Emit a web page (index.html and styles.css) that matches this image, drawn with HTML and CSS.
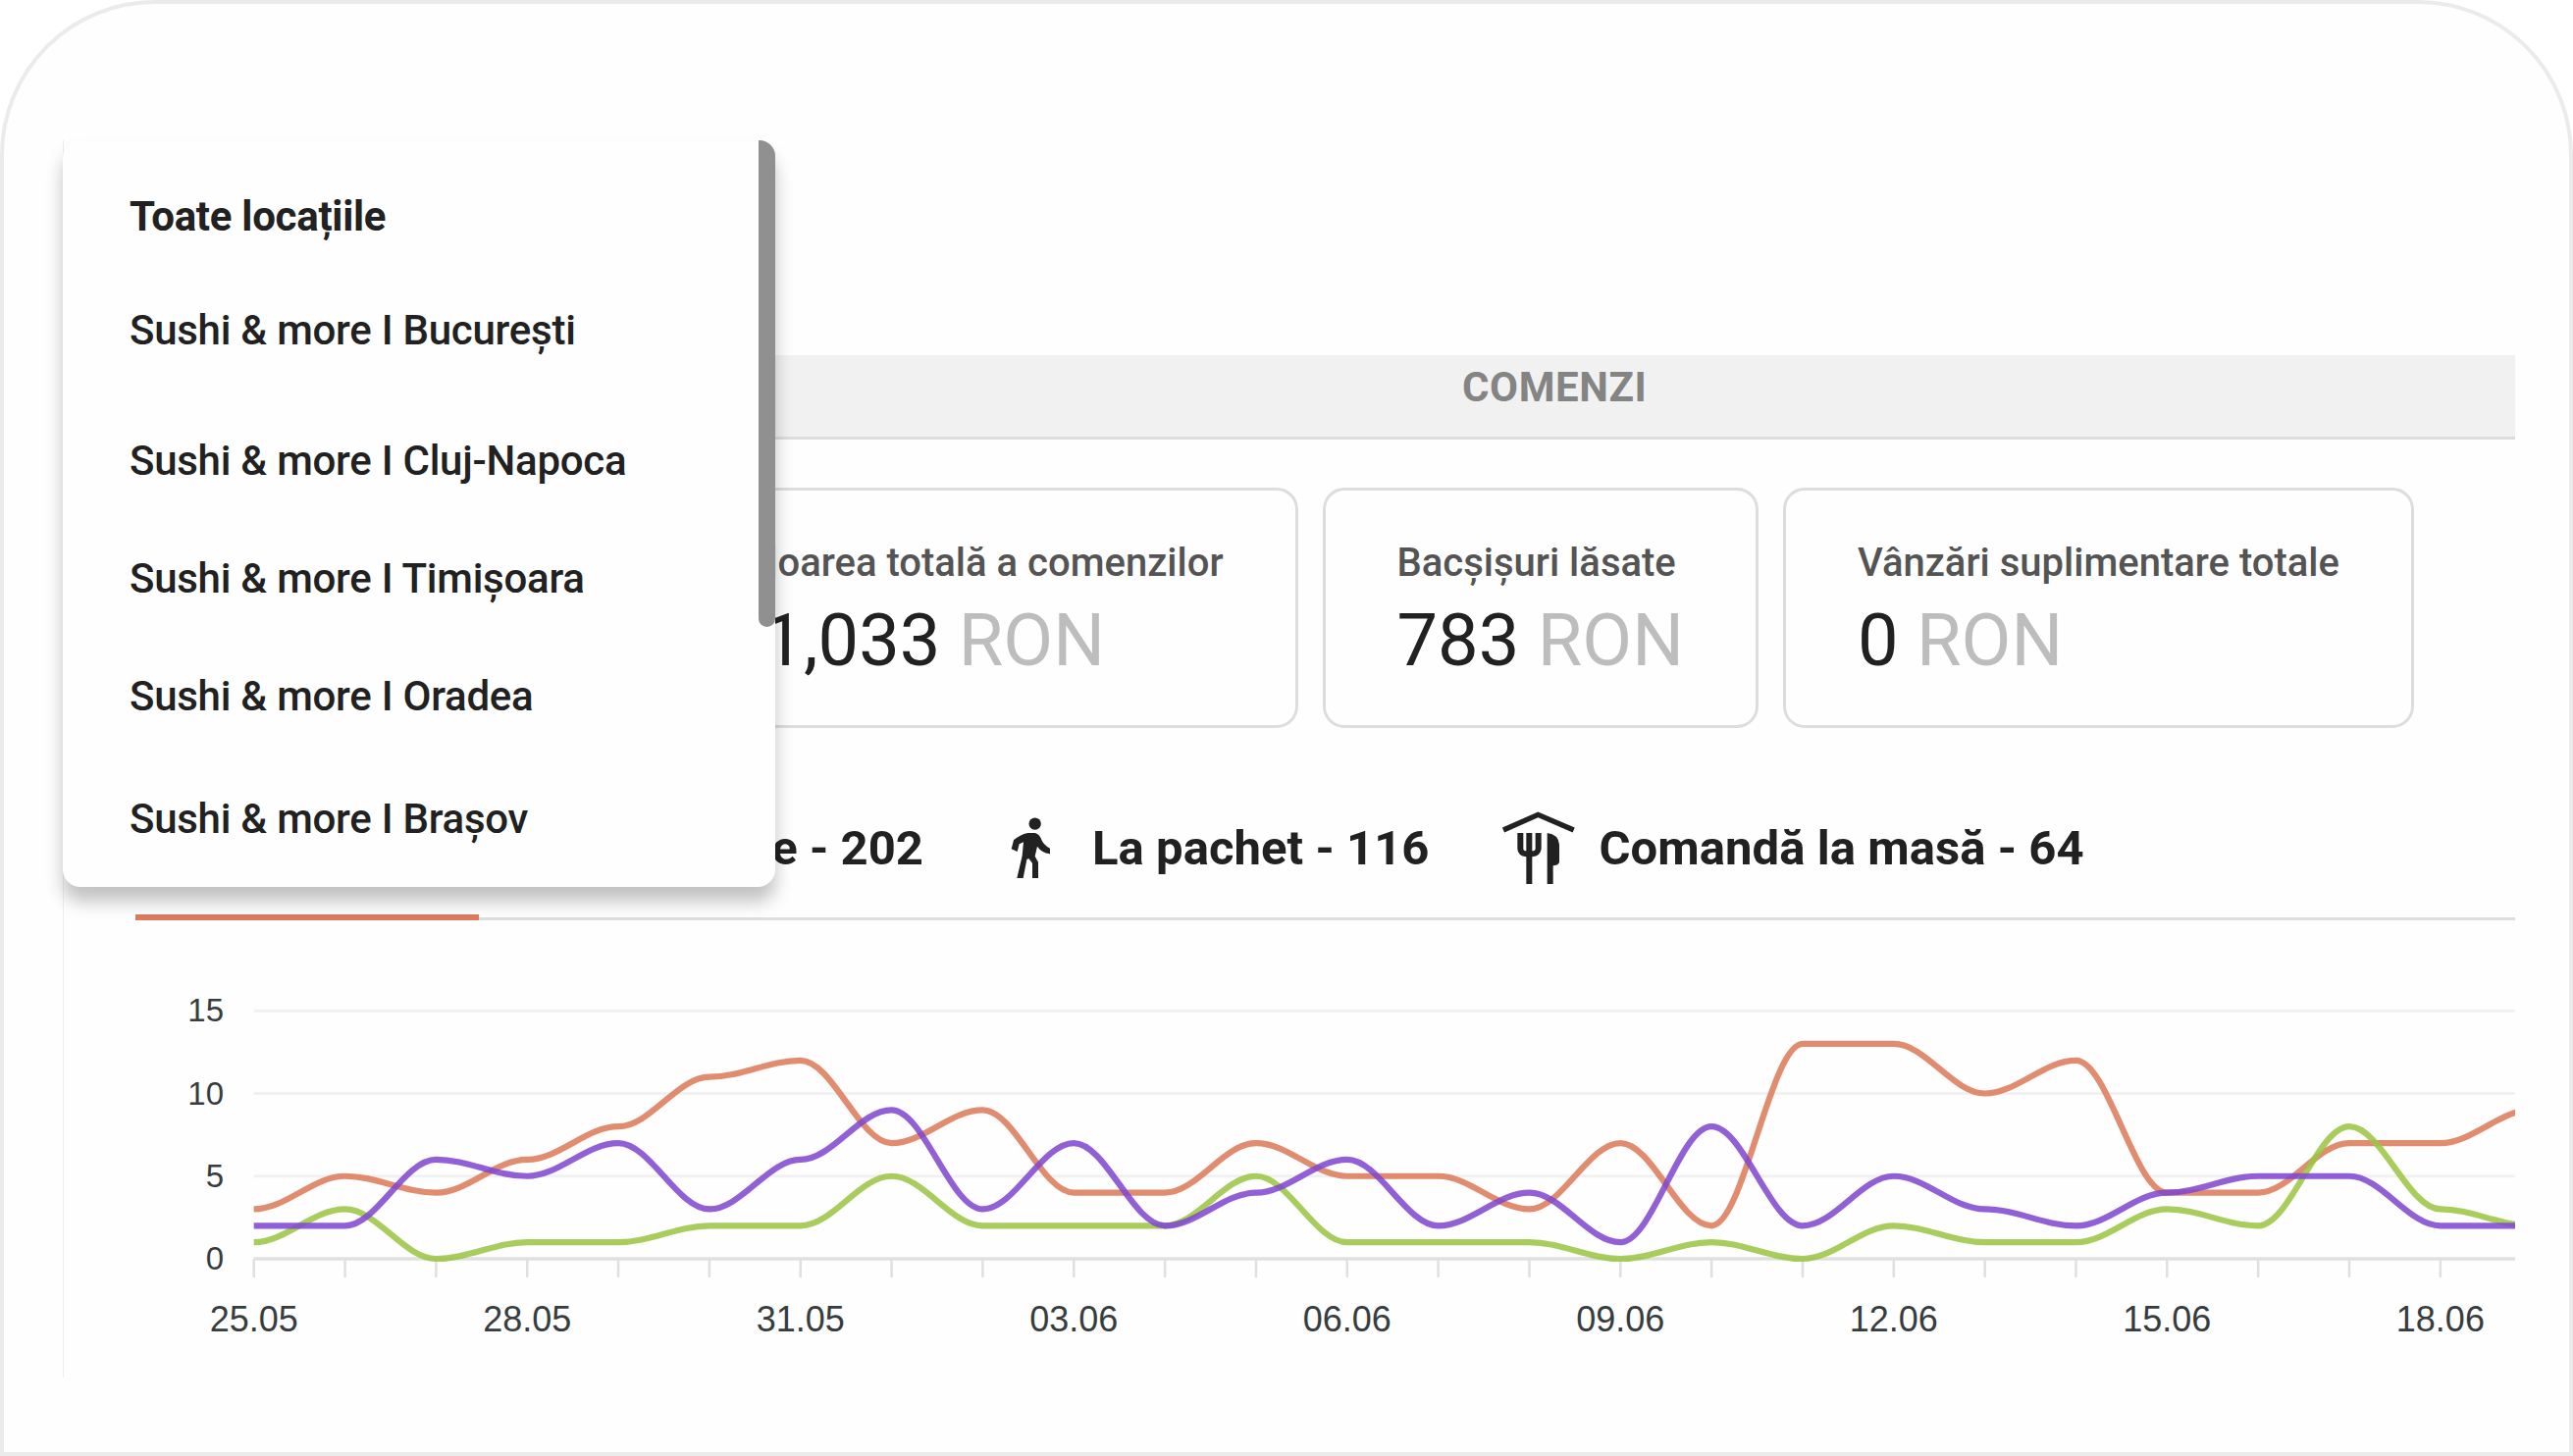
FILE: index.html
```html
<!DOCTYPE html>
<html lang="ro">
<head>
  <meta charset="UTF-8">
  <meta name="viewport" content="width=device-width, initial-scale=1.0">
  <title>Comenzi</title>
  <link rel="stylesheet" href="styles.css">
</head>
<body>
  <div class="frame">
    <main class="panel">
      <h1 class="section-title">COMENZI</h1>

      <div class="cards">
        <div class="card">
          <p class="card-label">Valoarea totală a comenzilor</p>
          <p class="card-value">51,033 <span>RON</span></p>
        </div>
        <div class="card">
          <p class="card-label">Bacșișuri lăsate</p>
          <p class="card-value">783 <span>RON</span></p>
        </div>
        <div class="card">
          <p class="card-label">Vânzări suplimentare totale</p>
          <p class="card-value">0 <span>RON</span></p>
        </div>
      </div>

      <div class="tabs">
        <div class="tab active">Livrare - 202</div>
        <div class="tab pickup">
          <svg class="icon" viewBox="0 0 270 270">
            <circle cx="134" cy="62" r="18.500"/>
            <path d="M112 90H134Q146 93 152 106Q158 126 180 137V154Q154 150 141 131L134 161L144 179V228H126V182L115 168L109 171L98 228H79L95 160L99 118L86 124L80 147L62 139L69 112Q88 95 112 90Z"/>
          </svg>
          <span>La pachet - 116</span>
        </div>
        <div class="tab table">
          <svg class="icon" viewBox="0 0 270 270">
            <path class="roof" d="M36 81L142 34L251 81"/>
            <path d="M79 90H97V138Q97 145 106 145V90H124V145Q134 145 134 138V90H152V138Q150 160 124 163V246H106V163Q80 160 79 138Z"/>
            <path d="M170 90Q204 94 207 125V180Q202 190 188 190V246H170Z"/>
          </svg>
          <span>Comandă la masă - 64</span>
        </div>
      </div>

      <svg class="chart" id="chart" viewBox="65 939 2498 465"></svg>
    </main>

    <div class="dropdown">
      <ul>
        <li class="selected">Toate locațiile</li>
        <li>Sushi &amp; more I București</li>
        <li>Sushi &amp; more I Cluj-Napoca</li>
        <li>Sushi &amp; more I Timișoara</li>
        <li>Sushi &amp; more I Oradea</li>
        <li>Sushi &amp; more I Brașov</li>
      </ul>
      <div class="scrollbar"></div>
    </div>
  </div>

  <script>
    const series = [
      { name: 'livrare', data: [3, 5, 4, 6, 8, 11, 12, 7, 9, 4, 4, 7, 5, 5, 3, 7, 2, 13, 13, 10, 12, 4, 4, 7, 7, 9] },
      { name: 'masa', data: [1, 3, 0, 1, 1, 2, 2, 5, 2, 2, 2, 5, 1, 1, 1, 0, 1, 0, 2, 1, 1, 3, 2, 8, 3, 2] },
      { name: 'pachet', data: [2, 2, 6, 5, 7, 3, 6, 9, 3, 7, 2, 4, 6, 2, 4, 1, 8, 2, 5, 3, 2, 4, 5, 5, 2, 2] }
    ];
    const dates = ['25.05', '28.05', '31.05', '03.06', '06.06', '09.06', '12.06', '15.06', '18.06'];

    const left = 258.7;
    const right = 2563;
    const bottom = 1284;
    const step = 92.84;
    const unit = 16.85;
    let html = '';

    // grid + y labels
    [15, 10, 5, 0].forEach((v) => {
      const y = bottom - v * unit;
      html += `<line class="${v ? 'grid' : 'axis'}" x1="${left}" x2="${right}" y1="${y}" y2="${y}"/>`;
      html += `<text class="y-label" x="228" y="${y + 11}">${v}</text>`;
    });

    // ticks + dates
    for (let i = 0; i < 25; i++) {
      const x = left + i * step;
      html += `<line class="tick" x1="${x}" x2="${x}" y1="${bottom}" y2="1303"/>`;
      if (i % 3 === 0) {
        html += `<text class="x-label" x="${x}" y="1358">${dates[i / 3]}</text>`;
      }
    }

    series.forEach((s) => {
      const c = step * 0.35;
      let d = '';
      s.data.forEach((v, i) => {
        const x = left + i * step;
        const y = bottom - v * unit;
        if (i === 0) {
          d = `M${x} ${y}`;
        } else {
          const prev = bottom - s.data[i - 1] * unit;
          d += `C${x - step + c} ${prev} ${x - c} ${y} ${x} ${y}`;
        }
      });
      html += `<path class="line ${s.name}" d="${d}"/>`;
    });

    document.getElementById('chart').innerHTML = html;
  </script>
</body>
</html>
```
FILE: styles.css
```css
body {
  margin: 0;
  background-color: #fff;
  font-family: Roboto, sans-serif;
  color: #212121;
}

h1, p, ul {
  margin: 0;
  padding: 0;
}

.frame {
  position: relative;
  box-sizing: border-box;
  width: 2622px;
  height: 1484px;
  padding: 139px 55px 0 60px;
  border: 4px solid #ebebeb;
  border-radius: 158px 158px 0 0;
  background-color: #fefefe;
  overflow: hidden;
}

.panel {
  box-sizing: border-box;
  height: 1261px;
  padding-top: 219px;
  border-left: 1px solid #eee;
  overflow: hidden;
}

.section-title {
  height: 83px;
  padding-left: 1425px;
  border-bottom: 3px solid #ddd;
  background-color: #f1f1f1;
  color: #848484;
  font-size: 42px;
  font-weight: 700;
  letter-spacing: 0.6px;
  line-height: 65px;
}

/* cards */
.cards {
  display: flex;
  justify-content: flex-end;
  gap: 25px;
  margin-top: 49px;
  padding-right: 103px;
}

.card {
  box-sizing: border-box;
  height: 245px;
  padding: 50px 73px 0;
  border: 3px solid #ddd;
  border-radius: 22px;
  white-space: nowrap;
}

.card-label {
  color: #545454;
  font-size: 40px;
  font-weight: 500;
  line-height: 48px;
}

.card-value {
  margin-top: 15px;
  font-size: 74px;
  line-height: 80px;
}

.card-value span {
  color: #bdbdbd;
}

/* tabs */
.tabs {
  position: relative;
  box-sizing: border-box;
  display: flex;
  height: 196px;
  margin-left: 73px;
  padding-top: 77px;
  border-bottom: 3px solid #ddd;
}

.tab {
  display: flex;
  align-items: center;
  height: 90px;
  font-size: 49px;
  font-weight: 700;
  letter-spacing: 0.05px;
  white-space: nowrap;
}

.tab.active {
  justify-content: flex-end;
  width: 803px;
}

.tab.active::after {
  content: "";
  position: absolute;
  left: 0;
  bottom: -3px;
  width: 350px;
  height: 6px;
  background-color: #dd7b5a;
}

.tab.pickup {
  gap: 13px;
  margin-left: 69px;
}

.tab.table {
  gap: 19px;
  margin-left: 64px;
}

.icon {
  width: 90px;
  height: 90px;
  fill: #212121;
}

.icon .roof {
  fill: none;
  stroke: #212121;
  stroke-width: 16;
}

/* chart */
.chart {
  display: block;
  width: 2498px;
  height: 465px;
}

.grid {
  stroke: #f1f1f1;
  stroke-width: 3;
}

.axis {
  stroke: #e0e0e0;
  stroke-width: 3.5;
}

.tick {
  stroke: #e0e0e0;
  stroke-width: 2.5;
}

.y-label, .x-label {
  fill: #373d3f;
  font-family: "Liberation Sans", Arial, sans-serif;
}

.y-label {
  font-size: 33px;
  text-anchor: end;
}

.x-label {
  font-size: 36px;
  text-anchor: middle;
}

.line {
  fill: none;
  stroke-width: 6.2;
  stroke-opacity: 0.87;
}

.livrare {
  stroke: #dd7b5a;
}

.masa {
  stroke: #9bc544;
}

.pachet {
  stroke: #8147d0;
}

/* locations menu */
.dropdown {
  position: absolute;
  top: 139px;
  left: 60px;
  box-sizing: border-box;
  width: 726px;
  height: 761px;
  padding: 53px 68px 0;
  border-radius: 18px;
  background-color: #fefefe;
  box-shadow: 0 15px 18px rgba(0, 0, 0, 0.24);
}

.dropdown ul {
  list-style: none;
  font-size: 42px;
  font-weight: 500;
  line-height: 50px;
  letter-spacing: -0.26px;
}

.dropdown li {
  margin-bottom: 70px;
}

.dropdown li:nth-child(1) {
  margin-bottom: 66px;
  font-weight: 700;
  letter-spacing: -0.28px;
}

.dropdown li:nth-child(2) {
  margin-bottom: 83px;
}

.dropdown li:nth-child(5) {
  margin-bottom: 75px;
}

.scrollbar {
  position: absolute;
  top: 0;
  right: 0;
  width: 17px;
  height: 496px;
  border-radius: 0 17px 9px 9px;
  background-color: #909090;
}
```
